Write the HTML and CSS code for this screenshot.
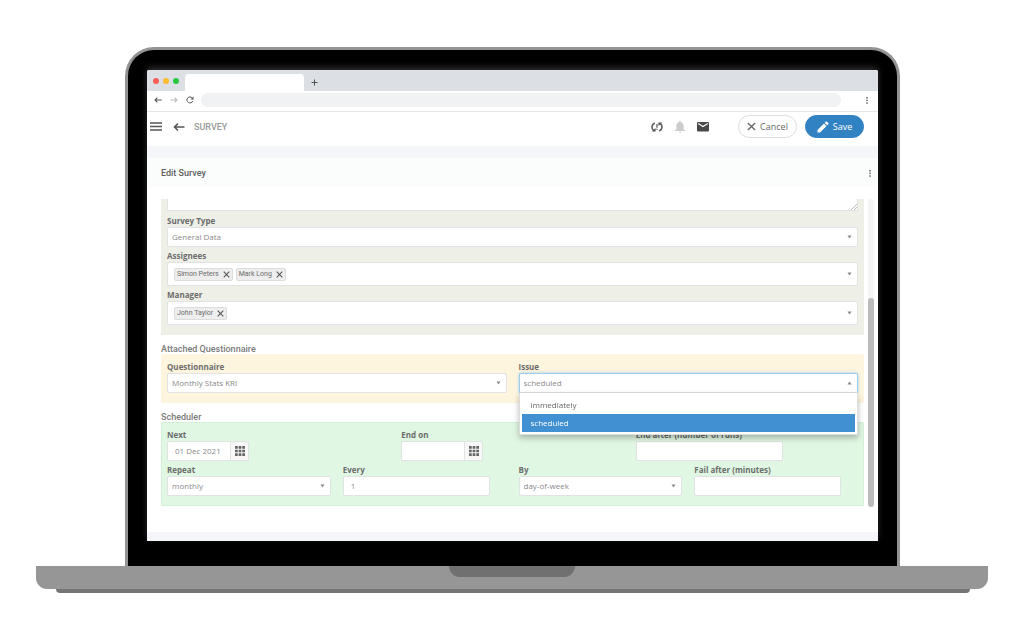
FILE: index.html
```html
<!DOCTYPE html>
<html lang="en">
<head>
<meta charset="utf-8">
<meta name="viewport" content="width=device-width, initial-scale=1">
<title>Edit Survey</title>
<link rel="stylesheet" href="styles.css">
</head>
<body>
<svg class="sprite" aria-hidden="true">
  <symbol id="close" viewBox="0 0 10 10"><path d="M1 1l8 8M9 1L1 9" fill="none" stroke="currentColor" stroke-width="1.500"/></symbol>
  <symbol id="back" viewBox="0 0 12 10"><path d="M11.500 5H1.500M5 1.500L1.500 5L5 8.500" fill="none" stroke="currentColor" stroke-width="1.600"/></symbol>
  <symbol id="grid" viewBox="0 0 11 11"><path d="M0 0h3v3H0zM4 0h3v3H4zM8 0h3v3H8zM0 4h3v3H0zM4 4h3v3H4zM8 4h3v3H8zM0 8h3v3H0zM4 8h3v3H4zM8 8h3v3H8z" fill="currentColor"/></symbol>
  <symbol id="more" viewBox="0 0 2 8"><path d="M.2 0h1.600v1.600H.2zM.2 3h1.600v1.600H.2zM.2 6h1.600v1.600H.2z" fill="currentColor"/></symbol>
</svg>
<div class="laptop">
  <div class="lid">
    <div class="screen">
      <div class="tabs">
        <span class="dot red"></span><span class="dot amber"></span><span class="dot green"></span>
        <span class="tab"></span>
        <button class="plain" aria-label="New tab"><svg width="7" height="7" viewBox="0 0 7 7"><path d="M3.500 .5v6M.5 3.500h6" stroke="#555" stroke-width="1"/></svg></button>
      </div>
      <div class="toolbar">
        <button class="plain" aria-label="Back"><svg width="8" height="8" viewBox="0 0 12 10"><use href="#back"/></svg></button>
        <button class="plain faded" aria-label="Forward"><svg class="flip" width="8" height="8" viewBox="0 0 12 10"><use href="#back"/></svg></button>
        <button class="plain" aria-label="Reload"><svg width="8" height="8" viewBox="0 0 16 16"><path d="M13.500 10A6 6 0 1 1 12.500 4" fill="none" stroke="currentColor" stroke-width="2"/><path d="M15 1v6H9z" fill="currentColor"/></svg></button>
        <input class="address" type="text" aria-label="Address">
        <button class="plain" aria-label="Browser menu"><svg width="2" height="7"><use href="#more"/></svg></button>
      </div>
      <header class="header">
        <button class="plain" aria-label="Menu"><svg width="12" height="9" viewBox="0 0 12 9"><path d="M0 1h12M0 4.500h12M0 8h12" stroke="#555" stroke-width="1.500"/></svg></button>
        <button class="plain back" aria-label="Go back"><svg width="12" height="10"><use href="#back"/></svg></button>
        <span class="crumb">SURVEY</span>
        <div class="icons">
          <button class="plain" aria-label="Sync"><svg width="12" height="12" viewBox="0 0 12 12"><path d="M3.800 2C.2 3.500.2 7.500 2.800 9.600M8.200 10C11.800 8.500 11.800 4.500 9.200 2.400" fill="none" stroke="#555" stroke-width="1.500"/><path d="M.8 10.600h3.800V7zM11.200 1.400H7.400V5z" fill="#555"/><path d="M6 3v3.700M6 7.700V9" stroke="#555" stroke-width="1.200"/></svg></button>
          <button class="plain" aria-label="Notifications"><svg width="12" height="12" viewBox="0 0 12 12"><path d="M6 0C5.300 0 5 .4 5 1.200 3 1.700 2.400 3.300 2.400 5v3L1 9.500v.6h10v-.6L9.600 8V5C9.600 3.300 9 1.700 7 1.200 7 .4 6.700 0 6 0zM4.800 10.700h2.400c0 1.600-2.400 1.600-2.400 0z" fill="#ccc"/></svg></button>
          <button class="plain" aria-label="Messages"><svg width="12" height="12" viewBox="0 0 12 12"><rect y="1" width="12" height="9.500" rx="1" fill="#484848"/><path d="M1.200 2.500L6 5.500l4.800-3" fill="none" stroke="#fff" stroke-width="1.100"/></svg></button>
        </div>
        <button class="pill"><svg width="9" height="9"><use href="#close"/></svg>Cancel</button>
        <button class="pill primary"><svg width="12" height="12" viewBox="0 0 12 12"><path d="M.5 9v2.500H3L9.500 5 7 2.500zM7.700 1.800l2.500 2.500 1.100-1.100c.4-.4.4-.8 0-1.100L9.900.7c-.3-.3-.8-.3-1.100 0z" fill="#fff"/></svg>Save</button>
      </header>
      <div class="band"></div>
      <div class="titlebar">
        <h1>Edit Survey</h1>
        <button class="plain" aria-label="More actions"><svg width="2" height="7"><use href="#more"/></svg></button>
      </div>
      <form class="form">
        <section class="panel olive">
          <div class="notes">
            <textarea class="control" aria-label="Description"></textarea>
            <svg class="grip" width="6" height="6" viewBox="0 0 6 6"><path d="M0 6L6 0M3 6l3-3" stroke="#aaa" stroke-width=".8"/></svg>
          </div>
          <div class="field">
            <label for="type">Survey Type</label>
            <select class="control" id="type"><option>General Data</option></select>
          </div>
          <div class="field" role="group" aria-labelledby="assignees">
            <span class="label" id="assignees">Assignees</span>
            <div class="control chips">
              <span class="chip">Simon Peters<button type="button" class="plain" aria-label="Remove Simon Peters"><svg width="7" height="7"><use href="#close"/></svg></button></span>
              <span class="chip">Mark Long<button type="button" class="plain" aria-label="Remove Mark Long"><svg width="7" height="7"><use href="#close"/></svg></button></span>
            </div>
          </div>
          <div class="field" role="group" aria-labelledby="manager">
            <span class="label" id="manager">Manager</span>
            <div class="control chips">
              <span class="chip">John Taylor<button type="button" class="plain" aria-label="Remove John Taylor"><svg width="7" height="7"><use href="#close"/></svg></button></span>
            </div>
          </div>
        </section>
        <h2>Attached Questionnaire</h2>
        <section class="panel cream">
          <div class="row two">
            <div class="field">
              <label for="questionnaire">Questionnaire</label>
              <select class="control" id="questionnaire"><option>Monthly Stats KRI</option></select>
            </div>
            <div class="field issue">
              <label for="issue">Issue</label>
              <select class="control open" id="issue"><option>scheduled</option></select>
              <ul class="menu" role="listbox" aria-label="Issue">
                <li role="option">immediately</li>
                <li role="option" class="chosen" aria-selected="true">scheduled</li>
              </ul>
            </div>
          </div>
        </section>
        <h2>Scheduler</h2>
        <section class="panel mint">
          <div class="row three">
            <div class="field">
              <label for="next">Next</label>
              <div class="date"><input class="control" id="next" type="text" value="01 Dec 2021"><button type="button" aria-label="Pick next date"><svg width="10" height="10"><use href="#grid"/></svg></button></div>
            </div>
            <div class="field">
              <label for="endon">End on</label>
              <div class="date"><input class="control" id="endon" type="text"><button type="button" aria-label="Pick end date"><svg width="10" height="10"><use href="#grid"/></svg></button></div>
            </div>
            <div class="field">
              <label for="runs">End after (number of runs)</label>
              <input class="control short" id="runs" type="text">
            </div>
          </div>
          <div class="row four">
            <div class="field">
              <label for="repeat">Repeat</label>
              <select class="control" id="repeat"><option>monthly</option></select>
            </div>
            <div class="field">
              <label for="every">Every</label>
              <input class="control short" id="every" type="text" value="1">
            </div>
            <div class="field">
              <label for="by">By</label>
              <select class="control" id="by"><option>day-of-week</option></select>
            </div>
            <div class="field">
              <label for="fail">Fail after (minutes)</label>
              <input class="control short" id="fail" type="text">
            </div>
          </div>
        </section>
        <div class="track"><div class="thumb"></div></div>
      </form>
      <div class="footer"></div>
    </div>
  </div>
  <div class="base"><div class="notch"></div></div>
  <div class="foot"></div>
</div>
</body>
</html>
```
FILE: styles.css
```css
* { box-sizing: border-box; }
body {
  margin: 0;
  padding: 47px 36px;
  background: #fff;
  color: #666;
  font: 8px/12px "Open Sans", "Noto Sans", sans-serif;
}
button, input, select, textarea { font: inherit; color: inherit; margin: 0; }
svg { display: block; flex: none; }
.sprite { position: absolute; width: 0; height: 0; }
.plain { display: flex; padding: 0; border: 0; background: none; color: #555; }
.faded { color: #bbb; }
.flip { transform: scaleX(-1); }

.lid {
  margin: 0 88px 0 89px;
  padding: 20px 19px 25px;
  border: 3px solid #939393;
  border-bottom: 0;
  border-radius: 29px 29px 0 0;
  background: #000;
}
.screen { background: #fff; border-radius: 2px 2px 0 0; box-shadow: 0 -3px 6px #2c2c2c; }
.base {
  height: 23px;
  background: #969696;
  border-radius: 0 0 11px 11px;
}
.notch { width: 126px; height: 11px; margin: 0 auto; background: #707070; border-radius: 0 0 11px 11px; }
.foot { height: 4px; margin: 0 18px 0 20px; background: #757575; border-radius: 0 0 4px 4px; }

.tabs {
  display: flex;
  align-items: center;
  gap: 4px;
  height: 21px;
  padding-left: 6px;
  background: #dce0e5;
  border-radius: 2px 2px 0 0;
}
.dot { width: 6px; height: 6px; border-radius: 50%; }
.red { background: #ff5f57; }
.amber { background: #febc2e; }
.green { background: #28c840; }
.tab { width: 119px; height: 17px; margin: 4px 3px 0 2px; background: #fff; border-radius: 4px 4px 0 0; }
.tabs .plain { margin-top: 3px; }
.toolbar {
  display: flex;
  align-items: center;
  gap: 8px;
  padding: 2px 10px 4px 7px;
  border-bottom: 1px solid #e4e6e8;
}
.address {
  flex: 1;
  min-width: 0;
  height: 14px;
  margin: 0 17px 0 -1px;
  padding: 0 8px;
  border: 0;
  border-radius: 7px;
  background: #f1f2f4;
}
.header { display: flex; align-items: center; padding: 3px 14px 8px 3px; }
.back { margin: 0 9px 0 11px; }
.crumb { color: #999; font: 500 9px/12px Roboto, sans-serif; }
.icons { display: flex; gap: 11px; margin: 0 29px 0 auto; }
.pill {
  display: flex;
  align-items: center;
  justify-content: center;
  gap: 4px;
  width: 59px;
  height: 23px;
  padding: 0;
  border: 1px solid #ddd;
  border-radius: 12px;
  background: #fff;
  font-size: 9px;
}
.primary { margin-left: 8px; border-color: #3182c3; background: #3182c3; color: #fff; }
.band { height: 12px; background: #f5f6f9; }
.titlebar {
  display: flex;
  align-items: center;
  justify-content: space-between;
  height: 29px;
  padding: 1px 7px 0 14px;
  background: #fbfcfc;
}
h1 { margin: 0; color: #606060; font: 500 9px/12px Roboto, sans-serif; }

.form { position: relative; margin: 12px 0 26px; padding: 0 14px; }
.panel { padding: 7px 6px 10px; border-radius: 2px; }
.olive { padding-top: 0; background: #eeefe7; border-radius: 0; }
.cream { background: #fdf5de; }
.mint { background: #e0f8e3; box-shadow: inset 0 0 0 1px #d2f1d6; }
h2 { margin: 9px 0 0; color: #7a7a7a; font: 500 9px/10px Roboto, sans-serif; }
.field { min-width: 0; }
.olive .field { margin-top: 3px; }
label, .label { display: block; font-weight: 700; color: #6c6c6c; }
.control {
  display: block;
  width: 100%;
  height: 20px;
  padding: 0 5px;
  border: 1px solid #e0e2e3;
  border-radius: 2px;
  background-color: #fff;
  color: #8a8a8a;
  appearance: none;
  outline: 0;
}
input.control { padding: 0 7px 2px; }
select.control { padding: 0 5px 0 4px; }
select.control, .chips {
  background-image: url("data:image/svg+xml,%3Csvg xmlns='http://www.w3.org/2000/svg' width='5' height='4'%3E%3Cpath d='M.5 .5h4L2.500 3.500z' fill='%23888'/%3E%3C/svg%3E");
  background-repeat: no-repeat;
  background-position: right 5px center;
}
select.open {
  border-color: #9ccbee;
  border-bottom-color: #ddd;
  border-radius: 2px 2px 0 0;
  background-image: url("data:image/svg+xml,%3Csvg xmlns='http://www.w3.org/2000/svg' width='5' height='4'%3E%3Cpath d='M.5 3.500h4L2.500 .5z' fill='%23888'/%3E%3C/svg%3E");
  box-shadow: 0 0 3px #9ccbee;
}
.notes { position: relative; padding-bottom: 1px; }
.notes .control { height: 12px; border-top: 0; border-radius: 0 0 2px 2px; resize: none; }
.grip { position: absolute; right: 1px; bottom: 2px; }
.chips { display: flex; align-items: center; gap: 3px; height: 24px; padding: 0 6px; }
.chip {
  display: flex;
  align-items: center;
  gap: 4px;
  height: 13px;
  padding: 0 2px;
  border: 1px solid #dcdcdc;
  border-radius: 2px;
  background: #eee;
  color: #6c6c6c;
  font-family: Roboto, sans-serif;
  font-size: 7px;
}
.row { display: grid; gap: 12px; }
.row + .row { margin-top: 3px; }
.two { grid-template-columns: repeat(2, minmax(0, 1fr)); }
.three { grid-template-columns: repeat(3, minmax(0, 1fr)); }
.four { grid-template-columns: repeat(4, minmax(0, 1fr)); }
.short { max-width: 147px; }
.date { display: flex; max-width: 82px; }
.date .control { flex: 1; min-width: 0; border-radius: 2px 0 0 2px; }
.date button {
  display: flex;
  align-items: center;
  justify-content: center;
  width: 18px;
  padding: 0 0 1px;
  border: 1px solid #dfe1e3;
  border-left: 0;
  border-radius: 0 2px 2px 0;
  background: #f8f8f8;
}
.issue { position: relative; }
.menu {
  position: absolute;
  z-index: 1;
  top: 100%;
  left: 0;
  right: 0;
  margin: 0;
  padding: 3px 2px 2px;
  border: 1px solid #ddd;
  border-top: 0;
  background: #fff;
  box-shadow: 0 3px 6px #0004;
  list-style: none;
  line-height: 18px;
}
.menu li { padding: 0 9px; }
.menu .chosen { background: #4190d1; color: #fff; }
.track { position: absolute; top: 0; bottom: 0; right: 4px; width: 6px; background: #f3f4f6; border-radius: 3px; }
.thumb { height: 68%; margin-top: 99px; background: #bbb; border-radius: 3px; }
.footer { height: 9px; background: #f4f6f9; }
```
